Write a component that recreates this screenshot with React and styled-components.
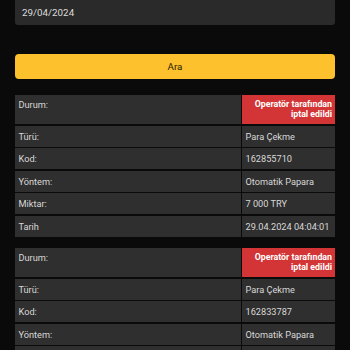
import React from "react";
import styled, { createGlobalStyle } from "styled-components";

const Global = createGlobalStyle`
  html, body { margin: 0; padding: 0; background: #0a0a0a; overflow: hidden; }
  body { font-family: Roboto, "Noto Sans", "Liberation Sans", sans-serif; }
`;

const Page = styled.div`
  width: 350px;
  background: #0a0a0a;
  padding: 0 15px;
  box-sizing: border-box;
  display: flex;
  flex-direction: column;
  & > * { flex-shrink: 0; }
`;

const DateInput = styled.div`
  height: 25px;
  background: #2a2a2a;
  border-radius: 0 0 3px 3px;
  color: #dcdcdc;
  font-size: 9.8px;
  display: flex;
  align-items: center;
  padding: 0 7px;
  box-sizing: border-box;
`;

const SearchButton = styled.button`
  margin-top: 29px;
  height: 25px;
  width: 100%;
  border: none;
  border-radius: 4px;
  background: #fcc12c;
  color: #2b2100;
  font-family: Roboto, "Liberation Sans", sans-serif;
  font-size: 9.8px;
  padding: 0;
`;

const Table = styled.div`
  margin-top: ${(p) => p.$mt}px;
  display: grid;
  grid-template-columns: 1fr 93px;
  column-gap: 1.5px;
  row-gap: 1.5px;
`;

const Cell = styled.div`
  background: ${(p) => (p.$status ? "#d33435" : "#2f2f2f")};
  color: ${(p) => (p.$status ? "#ffffff" : "#d8d8d8")};
  font-size: ${(p) => (p.$status ? "8.8px" : "9.2px")};
  font-weight: ${(p) => (p.$status ? 700 : 400)};
  text-align: ${(p) => (p.$status ? "right" : "left")};
  height: ${(p) => (p.$tall ? 29 : 21)}px;
  box-sizing: border-box;
  padding: ${(p) => (p.$tall ? "5px 3px 0 3.5px" : "0 3px 0 3.5px")};
  line-height: ${(p) => (p.$tall ? "9.6px" : "21px")};
  white-space: nowrap;
  overflow: hidden;
`;

const records = [
  { code: "162855710", date: "29.04.2024 04:04:01" },
  { code: "162833787", date: "29.04.2024 03:12:44" },
];

function Record({ rec, mt }) {
  return (
    <Table $mt={mt}>
      <Cell $tall>Durum:</Cell>
      <Cell $tall $status>
        Operatör tarafından
        <br />
        iptal edildi
      </Cell>
      <Cell>Türü:</Cell>
      <Cell>Para Çekme</Cell>
      <Cell>Kod:</Cell>
      <Cell>{rec.code}</Cell>
      <Cell>Yöntem:</Cell>
      <Cell>Otomatik Papara</Cell>
      <Cell>Miktar:</Cell>
      <Cell>7 000 TRY</Cell>
      <Cell>Tarih</Cell>
      <Cell>{rec.date}</Cell>
    </Table>
  );
}

export default function App() {
  return (
    <>
      <Global />
      <Page>
        <DateInput>29/04/2024</DateInput>
        <SearchButton>Ara</SearchButton>
        <Record rec={records[0]} mt={16} />
        <Record rec={records[1]} mt={11.5} />
      </Page>
    </>
  );
}
